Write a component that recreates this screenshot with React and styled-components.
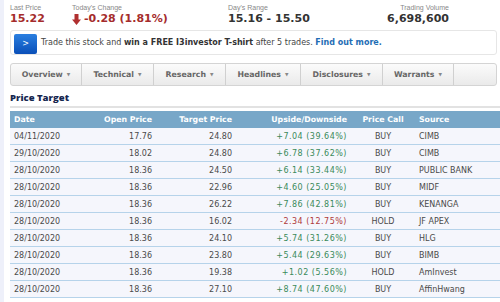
import React from "react";
import styled, { createGlobalStyle } from "styled-components";

const Global = createGlobalStyle`
  html, body { margin: 0; padding: 0; background: #eef0fa; overflow: hidden; }
  body { font-family: "DejaVu Sans", Verdana, sans-serif; }
`;

const Page = styled.div`
  margin-left: 4px;
  background: #fff;
  width: 496px;
  height: 302px;
  padding: 4px 0 0 6px;
  box-sizing: border-box;
  overflow: hidden;
`;

const Stats = styled.div`
  display: grid;
  grid-template-columns: 62px 156px 1fr auto;
  width: 439px;
`;

const Stat = styled.div`
  display: flex;
  flex-direction: column;
  align-items: ${(p) => (p.$right ? "flex-end" : "flex-start")};
`;

const Label = styled.div`
  font-family: "Liberation Sans", Arial, sans-serif;
  font-size: 7px;
  line-height: 8px;
  color: #888;
`;

const Value = styled.div`
  font-weight: bold;
  font-size: 11px;
  line-height: 14px;
  color: ${(p) => p.$color || "#333"};
  display: flex;
  align-items: center;
  gap: 3px;
`;

const Banner = styled.div`
  margin-top: 4px;
  width: 487px;
  height: 25px;
  box-sizing: border-box;
  border: 1px solid #e6e6e6;
  border-radius: 3px;
  display: flex;
  align-items: center;
  padding-left: 3px;
  gap: 4px;
  font-size: 8px;
  color: #444;
`;

const GoButton = styled.div`
  width: 23px;
  height: 20px;
  border-radius: 2px;
  background: linear-gradient(#2a7fe0, #0a4fb8);
  color: #fff;
  font-size: 8px;
  display: flex;
  align-items: center;
  justify-content: center;
  margin-top: 2px;
`;

const Strong = styled.b`
  color: ${(p) => p.$color || "#333"};
`;

const Nav = styled.div`
  margin-top: 8px;
  width: 487px;
  height: 23px;
  box-sizing: border-box;
  border: 1px solid #d4d4d4;
  border-radius: 3px;
  background: linear-gradient(#fbfbfb, #eaeaea);
  display: flex;
`;

const Tab = styled.div`
  width: ${(p) => p.$w}px;
  box-sizing: border-box;
  border-right: 1px solid #d0d0d0;
  display: flex;
  align-items: center;
  justify-content: center;
  gap: 4px;
  font-size: 7.8px;
  font-weight: bold;
  color: #666;
`;

const Caret = styled.span`
  font-size: 4.5px;
  color: #888;
`;

const Heading = styled.div`
  margin-top: 6px;
  font-family: "Open Sans", sans-serif;
  font-weight: 800;
  font-size: 9.5px;
  line-height: 12px;
  color: #16264f;
  padding-bottom: 2px;
  border-bottom: 2px solid #e2e2e2;
  width: 490px;
`;

const Table = styled.table`
  margin-top: 3px;
  border-collapse: collapse;
  table-layout: fixed;
  width: 490px;
  font-size: 8px;
`;

const Th = styled.th`
  background: #78a7c8;
  color: #fff;
  font-weight: bold;
  font-size: 7.8px;
  height: 17px;
  padding: 0 4px;
  text-align: ${(p) => p.$align || "left"};
  box-sizing: border-box;
  white-space: nowrap;
`;

const Td = styled.td`
  height: 16px;
  padding: 0 4px;
  background: #f5f6fc;
  border-bottom: 1px solid #b6d3ea;
  color: ${(p) => p.$color || "#4a4a4a"};
  text-align: ${(p) => p.$align || "left"};
  white-space: nowrap;
  letter-spacing: ${(p) => (p.$wide ? "0.5px" : "0")};
`;

const DownArrow = () => (
  <svg width="9" height="11" viewBox="0 0 9 11">
    <path d="M2.5 0h4v5.5h2.5L4.5 11 0 5.5h2.5z" fill="#b03030" />
  </svg>
);

const rows = [
  ["04/11/2020", "17.76", "24.80", "+7.04 (39.64%)", "BUY", "CIMB"],
  ["29/10/2020", "18.02", "24.80", "+6.78 (37.62%)", "BUY", "CIMB"],
  ["28/10/2020", "18.36", "24.50", "+6.14 (33.44%)", "BUY", "PUBLIC BANK"],
  ["28/10/2020", "18.36", "22.96", "+4.60 (25.05%)", "BUY", "MIDF"],
  ["28/10/2020", "18.36", "26.22", "+7.86 (42.81%)", "BUY", "KENANGA"],
  ["28/10/2020", "18.36", "16.02", "-2.34 (12.75%)", "HOLD", "JF APEX"],
  ["28/10/2020", "18.36", "24.10", "+5.74 (31.26%)", "BUY", "HLG"],
  ["28/10/2020", "18.36", "23.80", "+5.44 (29.63%)", "BUY", "BIMB"],
  ["28/10/2020", "18.36", "19.38", "+1.02 (5.56%)", "HOLD", "AmInvest"],
  ["28/10/2020", "18.36", "27.10", "+8.74 (47.60%)", "BUY", "AffinHwang"],
];

const tabs = [
  ["Overview", 71],
  ["Technical", 72],
  ["Research", 72],
  ["Headlines", 75],
  ["Disclosures", 82],
  ["Warrants", 71],
];

export default function App() {
  return (
    <>
      <Global />
      <Page>
        <Stats>
          <Stat>
            <Label>Last Price</Label>
            <Value $color="#a52c2c">15.22</Value>
          </Stat>
          <Stat>
            <Label>Today's Change</Label>
            <Value $color="#a52c2c">
              <DownArrow />
              -0.28 (1.81%)
            </Value>
          </Stat>
          <Stat>
            <Label>Day's Range</Label>
            <Value>15.16 - 15.50</Value>
          </Stat>
          <Stat $right>
            <Label>Trading Volume</Label>
            <Value>6,698,600</Value>
          </Stat>
        </Stats>
        <Banner>
          <GoButton>&gt;</GoButton>
          <span>
            Trade this stock and <Strong>win a FREE I3investor T-shirt</Strong> after 5 trades.{" "}
            <Strong $color="#1f6db5">Find out more.</Strong>
          </span>
        </Banner>
        <Nav>
          {tabs.map(([t, w]) => (
            <Tab key={t} $w={w}>
              {t} <Caret>▼</Caret>
            </Tab>
          ))}
        </Nav>
        <Heading>Price Target</Heading>
        <Table>
          <colgroup>
            <col style={{ width: 80 }} />
            <col style={{ width: 66 }} />
            <col style={{ width: 80 }} />
            <col style={{ width: 115 }} />
            <col style={{ width: 64 }} />
            <col style={{ width: 85 }} />
          </colgroup>
          <thead>
            <tr>
              <Th>Date</Th>
              <Th $align="right">Open Price</Th>
              <Th $align="right">Target Price</Th>
              <Th $align="right">Upside/Downside</Th>
              <Th $align="center">Price Call</Th>
              <Th>Source</Th>
            </tr>
          </thead>
          <tbody>
            {rows.map((r, i) => (
              <tr key={i}>
                <Td>{r[0]}</Td>
                <Td $align="right">{r[1]}</Td>
                <Td $align="right">{r[2]}</Td>
                <Td $align="right" $wide $color={r[3].startsWith("-") ? "#b03a3a" : "#3a8a5a"}>
                  {r[3]}
                </Td>
                <Td $align="center">{r[4]}</Td>
                <Td>{r[5]}</Td>
              </tr>
            ))}
          </tbody>
        </Table>
      </Page>
    </>
  );
}
